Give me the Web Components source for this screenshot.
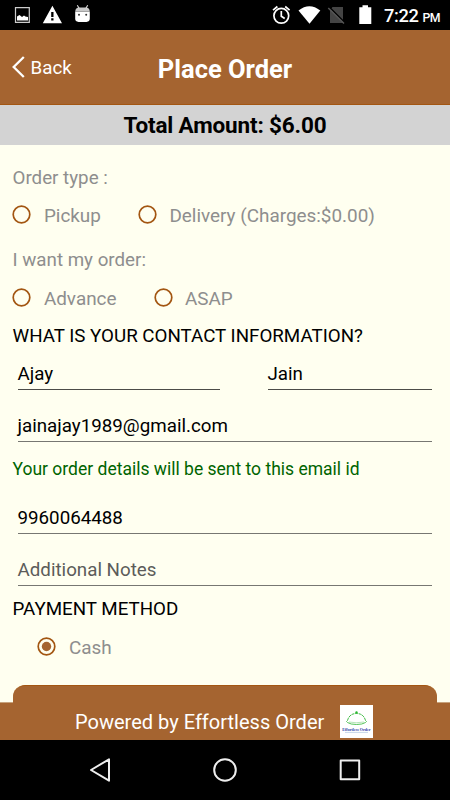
<!DOCTYPE html>
<html lang="en">
<head>
<meta charset="utf-8">
<meta name="viewport" content="width=device-width, initial-scale=1">
<title>Place Order</title>
<style>
  body {
    margin: 0;
    font-family: Roboto, "Liberation Sans", sans-serif;
    --brown: #a56430;
    --edge: #a35612;
    --cream: #fffff0;
  }
</style>
</head>
<body>
<order-screen></order-screen>

<script>
function define(name, html) {
  const template = document.createElement('template');
  template.innerHTML = html;

  customElements.define(name, class extends HTMLElement {
    constructor() {
      super();
      this.attachShadow({ mode: 'open' }).append(template.content.cloneNode(true));
    }
  });
}

define('status-bar', `
  <style>
    :host {
      display: flex;
      justify-content: space-between;
      height: 30px;
      background: #000;
      color: #fff;
    }
    svg { display: block; }
    .right { display: flex; }
    .time {
      width: 66px;
      font-size: 18.3px;
      line-height: 32px;
      letter-spacing: -0.4px;
      font-weight: 500;
      white-space: nowrap;
    }
    small { font-size: 12.3px; margin-left: 4px; }
  </style>
  <svg width="100" height="30" fill="#fff">
    <path d="M15.5 7.7h13.8v14.6H15.5z" fill="none" stroke="#ccc" stroke-width="1.2"/>
    <path d="M17 20.5v-4l2.5-1.5 2.5 2 2-1.5 1.3 1 2.7.5v3.5z"/>
    <path fill-rule="evenodd" d="M52.4 5.8 62 23.3H42.8zM51.2 12v5h2.3v-5zM51.2 18.3v2.3h2.3v-2.3z"/>
    <path d="M75.2 11.6h14.6v7q0 3.3-3.3 3.3h-8q-3.3 0-3.3-3.3z"/>
    <path d="M75.2 11.6q.2-3.9 4-4h6.6q3.8.1 4 4z" fill="#c8c8c8"/>
    <path d="m77.3 5.3 1.8 3m8.6-3-1.8 3" stroke="#ddd" stroke-width="1.1"/>
    <circle cx="79" cy="14.8" r="1" fill="#333"/>
    <circle cx="86.2" cy="14.8" r="1" fill="#333"/>
  </svg>
  <div class="right">
    <svg width="115" height="30" viewBox="269.5 0 115 30">
      <g fill="none" stroke="#fff" stroke-width="1.7">
        <circle cx="281.8" cy="15.8" r="7.4"/>
        <path d="M281.8 11v5.2l3.4 2.3M273.5 10.2l4.4-3.7M285.7 6.5l4.4 3.7"/>
      </g>
      <path d="M299 10.5q10.9-8.7 21.8 0L310 23.8z" fill="#fff"/>
      <path d="M333 7h10.5v16h-13V10z" fill="#444"/>
      <path d="m330 7.3 15.5 15.5" stroke="#000" stroke-width="1.5"/>
      <path d="m328.8 8 15.7 15.5" stroke="#555" stroke-width="1.5"/>
      <path d="M363 5.3h5.5v2h3.3V24h-12V7.3h3.2z" fill="#fff"/>
    </svg>
    <div class="time">7:22<small>PM</small></div>
  </div>
`);

define('nav-header', `
  <style>
    :host {
      display: grid;
      grid-template-columns: 100px 1fr 100px;
      align-items: center;
      height: 75px;
      box-sizing: border-box;
      border-bottom: 1px solid var(--edge);
      background: var(--brown);
      color: #fff;
    }
    .back {
      display: flex;
      align-items: center;
      gap: 5.5px;
      padding-left: 12px;
      font-size: 18.75px;
    }
    .back span { padding-top: 2px; }
    h1 {
      margin: 3px 0 0;
      text-align: center;
      font-size: 25.5px;
      line-height: 30px;
      font-weight: 700;
      white-space: nowrap;
    }
  </style>
  <div class="back">
    <svg width="13" height="22" fill="none" stroke="#fff" stroke-width="2.3"><path d="M11.8 1 1.7 11l10.1 10"/></svg>
    <span><slot name="back"></slot></span>
  </div>
  <h1><slot></slot></h1>
`);

define('total-bar', `
  <style>
    :host {
      display: block;
      height: 40px;
      background: #d3d3d3;
      color: #000;
      text-align: center;
      font-size: 22.5px;
      letter-spacing: -0.15px;
      line-height: 41px;
      font-weight: 700;
    }
  </style>
  <slot></slot>
`);

define('form-label', `
  <style>
    :host {
      display: flex;
      align-items: center;
      padding-left: 12.5px;
      font-size: 18.75px;
      color: #8e8e8e;
      white-space: nowrap;
    }
    :host([heading]) { color: #000; }
    :host([hint]) { color: #006400; font-size: 17.5px; }
  </style>
  <span><slot></slot></span>
`);

define('radio-option', `
  <style>
    :host {
      display: flex;
      align-items: center;
      gap: 12.5px;
      font-size: 18.9px;
      color: #8e8e8e;
      white-space: nowrap;
    }
    svg { display: block; margin-bottom: 1px; }
    span { padding-top: 1px; }
    .ring { fill: none; stroke: var(--edge); stroke-width: 1.7px; }
    .dot { display: none; fill: var(--brown); }
    :host([checked]) .dot { display: block; }
  </style>
  <svg width="19" height="19">
    <circle class="ring" cx="9.5" cy="9.5" r="8.3"/>
    <circle class="dot" cx="9.5" cy="9.5" r="4.7"/>
  </svg>
  <span><slot></slot></span>
`);

define('text-field', `
  <style>
    :host {
      display: block;
      box-sizing: border-box;
      height: 34px;
      padding-top: 7px;
      border-bottom: 1px solid #4c4c48;
      font-size: 18.75px;
      line-height: 22px;
      color: #000;
      white-space: nowrap;
    }
    :host([soft]) { border-bottom-color: #777772; }
    :host([placeholder]) { color: #5c5c5a; }
  </style>
  <slot></slot>
`);

define('powered-footer', `
  <style>
    :host {
      display: block;
      height: 55px;
      background: linear-gradient(transparent 17px, #c7a27c 17px, #c7a27c 18px, var(--brown) 18px);
      color: #fff;
    }
    .panel {
      display: flex;
      align-items: flex-start;
      box-sizing: border-box;
      height: 55px;
      margin: 0 13px;
      padding: 20px 0 0 62px;
      gap: 15px;
      border-top: 1px solid var(--edge);
      border-radius: 12px 12px 0 0;
      background: var(--brown);
      font-size: 20.05px;
      white-space: nowrap;
    }
    .text { padding-top: 4px; line-height: 24px; width: 250px; }
    svg { display: block; margin-top: -1px; }
    text { font: 700 4px "Liberation Serif", serif; fill: #2638a4; }
  </style>
  <div class="panel">
    <div class="text"><slot></slot></div>
    <svg width="33" height="33">
      <path d="M0 0h33v33H0z" fill="#fff"/>
      <g fill="none" stroke="#43bd48">
        <path d="M7.5 15.5q2-7 9-7t9 7" stroke-width="1" stroke-dasharray="3 .6"/>
        <path d="M7.5 15.5q-2 1 0 2 3 2 9 2t9-2q2-1 0-2" stroke-width=".9"/>
        <path d="M9 17q7 1.5 15 0" stroke-width=".4"/>
      </g>
      <circle cx="16.5" cy="7.5" r="1.2" fill="#28b52f"/>
      <text x="2.3" y="25.5" textLength="28.2" lengthAdjust="spacingAndGlyphs">Effortless Order</text>
      <path d="M5 27.4h23" stroke="#9fb9d8" stroke-width=".6"/>
    </svg>
  </div>
`);

define('android-nav', `
  <style>
    :host { display: block; height: 60px; background: #000; }
    svg { display: block; }
  </style>
  <svg width="450" height="60" fill="none" stroke="#eee" stroke-width="2" stroke-linejoin="round">
    <path d="M91 30 109 19.3v21.4z"/>
    <circle cx="225" cy="30" r="10.8"/>
    <rect x="340.7" y="20.5" width="18.5" height="18.7"/>
  </svg>
`);

define('order-screen', `
  <style>
    :host {
      display: flex;
      flex-direction: column;
      width: 450px;
      height: 800px;
      overflow: hidden;
      background: var(--cream);
    }
    form {
      flex: 1;
      display: flex;
      flex-direction: column;
      min-height: 0;
      padding-top: 20px;
    }
    .options { display: flex; gap: 37px; padding-left: 12.4px; }
    .fields { display: flex; gap: 47.5px; margin: 0 18px 18px 17.5px; }
    text-field { margin: 0 18px 0 17.5px; }
    .fields text-field { margin: 0; }
    .first { width: 202.5px; }
    .last { flex: 1; }
  </style>
  <status-bar></status-bar>
  <nav-header><span slot="back">Back</span>Place Order</nav-header>
  <total-bar>Total Amount: $6.00</total-bar>
  <form>
    <form-label style="height: 25px">Order type :</form-label>
    <div class="options" style="height: 50px">
      <radio-option>Pickup</radio-option>
      <radio-option>Delivery (Charges:$0.00)</radio-option>
    </div>
    <form-label style="height: 40px">I want my order:</form-label>
    <div class="options" style="height: 36px">
      <radio-option>Advance</radio-option>
      <radio-option>ASAP</radio-option>
    </div>
    <form-label heading style="height: 40px">WHAT IS YOUR CONTACT INFORMATION?</form-label>
    <div class="fields">
      <text-field class="first">Ajay</text-field>
      <text-field class="last">Jain</text-field>
    </div>
    <text-field soft>jainajay1989@gmail.com</text-field>
    <form-label hint style="height: 53px; margin-bottom: 5px">Your order details will be sent to this email id</form-label>
    <text-field soft style="margin-bottom: 18px">9960064488</text-field>
    <text-field soft placeholder>Additional Notes</text-field>
    <form-label heading style="height: 46px">PAYMENT METHOD</form-label>
    <div class="options" style="height: 30px; padding-left: 37.4px">
      <radio-option checked>Cash</radio-option>
    </div>
  </form>
  <powered-footer>Powered by Effortless Order</powered-footer>
  <android-nav></android-nav>
`);
</script>
</body>
</html>
